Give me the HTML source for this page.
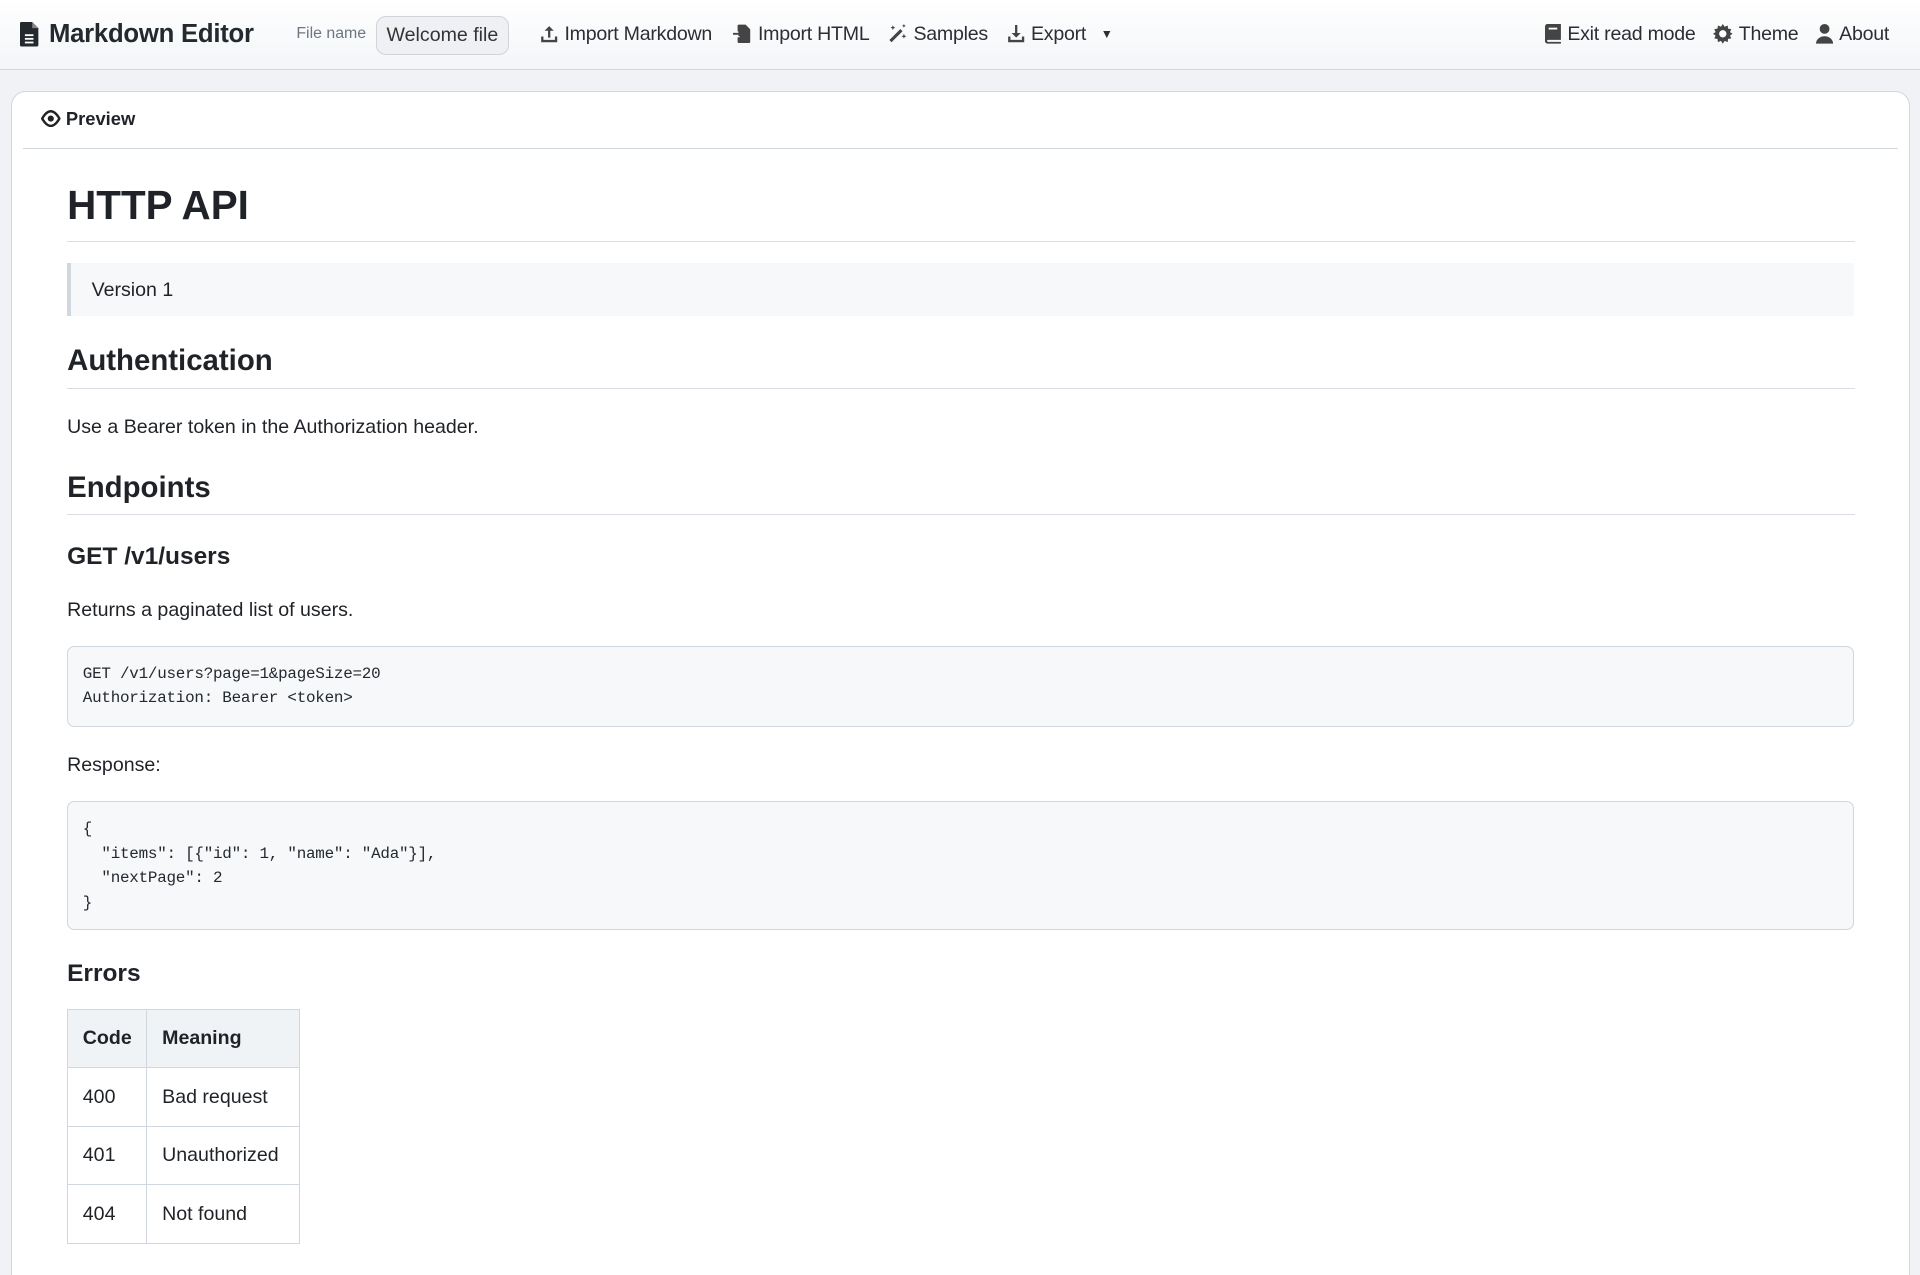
<!DOCTYPE html>
<html><head><meta charset="utf-8"><style>
html,body{margin:0;padding:0;}
body{width:1920px;height:1275px;overflow:hidden;background:#f0f2f5;}
#z{zoom:1.22449;width:1568px;height:1041px;position:relative;overflow:hidden;font-family:"Liberation Sans",sans-serif;color:#1f2328;}
.hdr{position:absolute;left:0;top:0;width:1568px;height:56px;background:linear-gradient(#fff,#f3f5f8);border-bottom:1px solid #d0d7de;}
.a{position:absolute;top:0;height:56px;display:flex;align-items:center;white-space:nowrap;}
.logo{left:16px;font-size:21px;font-weight:bold;color:#24292f;letter-spacing:-0.2px;}
.fn{left:242px;font-size:13px;color:#6e7781;}
.inp{position:absolute;left:307px;top:13px;width:107px;height:30px;border:1px solid #cfd4da;border-radius:8px;background:#eef0f3;font-size:16px;line-height:30px;text-align:center;color:#333;}
.btn{font-size:16px;color:#2b2f33;letter-spacing:-0.2px;}
.btn svg{margin-right:5px;}
.card{position:absolute;left:9px;top:74px;width:1549px;height:1000px;background:#fff;border:1px solid #d0d7de;border-radius:12px;}
.ph{position:absolute;left:24px;top:13px;font-size:15px;font-weight:bold;display:flex;align-items:center;}
.phl{position:absolute;left:9px;right:9px;top:46px;border-top:1px solid #d0d7de;}
.t{position:absolute;white-space:nowrap;}
h1,h2,h3{margin:0;font-weight:bold;}
.hr{position:absolute;left:45px;width:1460px;border-top:1px solid #d8dee4;}
.p{font-size:16px;}
pre{margin:0;position:absolute;left:45px;width:1434px;background:#f6f8fa;border:1px solid #d0d7de;border-radius:6px;padding:0 12px;font-family:"Liberation Mono",monospace;font-size:13px;line-height:20px;color:#24292f;letter-spacing:-0.2px;}
table{position:absolute;left:45px;top:749px;border-collapse:collapse;font-size:16px;}
td,th{border:1px solid #d0d7de;height:47px;padding:0 12px;text-align:left;}
th{background:#f0f3f6;font-weight:bold;}
</style></head><body><div id="z">
<div class="hdr">
 <div class="a logo"><svg width="16" height="20" viewBox="0 0 16 20" style="margin-right:8px"><path d="M1 0h9l5 5v14a1 1 0 0 1-1 1H1a1 1 0 0 1-1-1V1a1 1 0 0 1 1-1z" fill="#24292f"/><path d="M10 0v5h5" fill="#888"/><rect x="4" y="10" width="7" height="1.5" fill="#fff"/><rect x="4" y="13" width="7" height="1.5" fill="#fff"/><rect x="4" y="16" width="7" height="1.5" fill="#fff"/></svg>Markdown Editor</div>
 <div class="a fn">File name</div>
 <div class="inp">Welcome file</div>
 <div class="a btn" style="left:441px"><svg width="15" height="15" viewBox="0 0 16 16"><path d="M8 1l-4 4h3v6h2V5h3z M1 10v5h14v-5h-2v3H3v-3z" fill="#444"/></svg>Import Markdown</div>
 <div class="a btn" style="left:599px"><svg width="15" height="16" viewBox="0 0 16 16"><path d="M5 0h6l4 4v11a1 1 0 0 1-1 1H5a1 1 0 0 1-1-1v-4h2V6h-2V1a1 1 0 0 1 1-1z" fill="#444"/><path d="M0 8h7l-2-2M7 8l-2 2" stroke="#444" stroke-width="1.6" fill="none"/></svg>Import HTML</div>
 <div class="a btn" style="left:725px"><svg width="16" height="16" viewBox="0 0 16 16"><path d="M2 14L11 5" stroke="#444" stroke-width="2.5"/><path d="M4 1l.6 1.4L6 3l-1.4.6L4 5l-.6-1.4L2 3l1.4-.6zM13 8l.6 1.4L15 10l-1.4.6L13 12l-.6-1.4L11 10l1.4-.6zM13 0l.5 1 1 .5-1 .5-.5 1-.5-1-1-.5 1-.5z" fill="#444"/></svg>Samples</div>
 <div class="a btn" style="left:822px"><svg width="15" height="15" viewBox="0 0 16 16"><path d="M7 0h2v7h3l-4 4-4-4h3z M1 10v5h14v-5h-2v3H3v-3z" fill="#444"/></svg>Export<span style="font-size:10px;margin-left:12px">▼</span></div>
 <div class="a btn" style="left:1262px"><svg width="13" height="16" viewBox="0 0 13 16"><path d="M2 0h11v13H2.5a.8.8 0 0 0 0 1.6H13V16H2a2 2 0 0 1-2-2V2a2 2 0 0 1 2-2z" fill="#444"/><rect x="3" y="3" width="7" height="1.5" fill="#fff"/></svg>Exit read mode</div>
 <div class="a btn" style="left:1399px"><svg width="16" height="16" viewBox="0 0 16 16"><path d="M8 0l1.5 2.2 2.5-1 .3 2.6 2.6.4-1 2.4L16 8l-2.1 1.4 1 2.4-2.6.4-.3 2.6-2.5-1L8 16l-1.5-2.2-2.5 1-.3-2.6-2.6-.4 1-2.4L0 8l2.1-1.4-1-2.4 2.6-.4.3-2.6 2.5 1z" fill="#444"/><circle cx="8" cy="8" r="3" fill="#fff"/></svg>Theme</div>
 <div class="a btn" style="left:1483px"><svg width="14" height="16" viewBox="0 0 14 16"><circle cx="7" cy="4" r="4" fill="#444"/><path d="M0 16a7 6 0 0 1 14 0z" fill="#444"/></svg>About</div>
</div>
<div class="card">
 <div class="ph"><svg width="16" height="14" viewBox="0 0 16 14" style="margin-right:4px"><path d="M8 1C4 1 1 7 1 7s3 6 7 6 7-6 7-6-3-6-7-6z" fill="none" stroke="#222" stroke-width="2"/><circle cx="8" cy="7" r="2.5" fill="#222"/></svg>Preview</div>
 <div class="phl"></div>
 <h1 class="t" style="left:45px;top:72px;font-size:33px;line-height:42px">HTTP API</h1>
 <div class="hr" style="top:122px"></div>
 <div style="position:absolute;left:45px;top:140px;width:1456px;height:43px;background:#f6f8fa;border-left:4px solid #d0d7de;"></div>
 <div class="t p" style="left:65px;top:153px">Version 1</div>
 <h2 class="t" style="left:45px;top:205px;font-size:24px;line-height:30px">Authentication</h2>
 <div class="hr" style="top:242px"></div>
 <div class="t p" style="left:45px;top:265px">Use a Bearer token in the Authorization header.</div>
 <h2 class="t" style="left:45px;top:309px;font-size:24px;line-height:30px">Endpoints</h2>
 <div class="hr" style="top:345px"></div>
 <h3 class="t" style="left:45px;top:368px;font-size:20px;line-height:24px">GET /v1/users</h3>
 <div class="t p" style="left:45px;top:414px">Returns a paginated list of users.</div>
 <pre style="top:453px;height:44px;padding-top:12px;padding-bottom:8px">GET /v1/users?page=1&amp;pageSize=20
Authorization: Bearer &lt;token&gt;</pre>
 <div class="t p" style="left:45px;top:541px">Response:</div>
 <pre style="top:579px;height:84px;padding-top:13px;padding-bottom:7px">{
  "items": [{"id": 1, "name": "Ada"}],
  "nextPage": 2
}</pre>
 <h3 class="t" style="left:45px;top:708px;font-size:20px;line-height:24px">Errors</h3>
 <table>
  <tr><th style="width:40px">Code</th><th style="width:100px">Meaning</th></tr>
  <tr><td>400</td><td>Bad request</td></tr>
  <tr><td>401</td><td>Unauthorized</td></tr>
  <tr><td>404</td><td>Not found</td></tr>
 </table>
</div>
</div></body></html>
